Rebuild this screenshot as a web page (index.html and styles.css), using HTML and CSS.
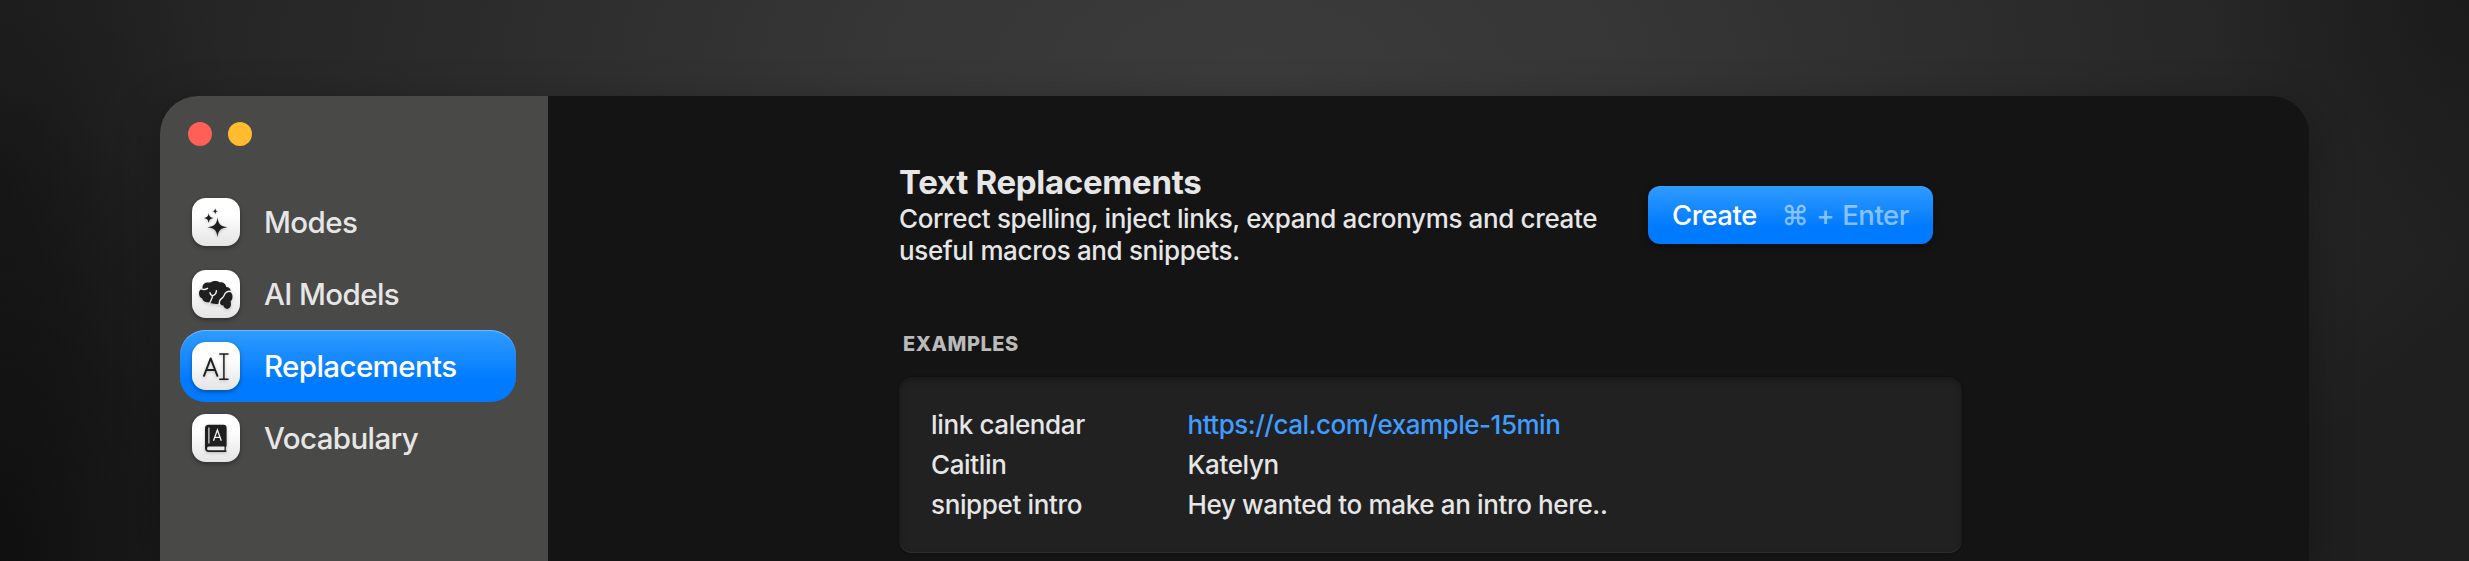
FILE: index.html
```html
<!DOCTYPE html>
<html lang="en">
<head>
<meta charset="utf-8">
<title>Text Replacements</title>
<link rel="stylesheet" href="styles.css">
</head>
<body>
<div class="window">
  <aside class="sidebar">
    <div class="controls"><span class="dot close"></span><span class="dot minimize"></span></div>
    <nav class="nav">
      <a class="item">
        <span class="tile"><svg viewBox="0 0 48 48"><g fill="#1f1f1f"><path d="M25.500 19.200C26.500 26.500 28.200 28.200 35.500 29.200C28.200 30.200 26.500 31.900 25.500 39.200C24.500 31.900 22.800 30.200 15.500 29.200C22.800 28.200 24.500 26.500 25.500 19.200Z"/><path d="M16.700 14.900C17.400 18.500 18 19.200 21.800 20C18 20.800 17.400 21.500 16.700 25.100C16 21.500 15.400 20.800 11.800 20C15.400 19.200 16 18.500 16.700 14.900Z"/><path d="M23.200 10.200C23.600 12.400 24 12.800 26.200 13.200C24 13.600 23.600 14 23.200 16.200C22.800 14 22.400 13.600 20.200 13.200C22.400 12.800 22.800 12.400 23.200 10.200Z"/></g></svg></span>
        <span class="label">Modes</span>
      </a>
      <a class="item">
        <span class="tile"><svg viewBox="0 0 48 48"><path fill="#1f1f1f" d="M10.500 18.500C10 14.500 13 12.300 16.600 12.600C18 12.500 18.500 12.500 19 12.300C21 10.500 25.500 10.500 27.500 12.300C30.500 11.800 34 13.500 34.200 17C37.500 17 39 19.500 38.700 22.200C41.200 24.500 41 29.200 38.500 31.500C39.500 34 39 38 36 38.800C33.500 39.300 31.800 37.500 31.300 35.300C30 35.600 28.800 35 28 33.600C25.500 34.400 22 34 19.500 33.300Q17.500 33.500 16.500 32.200C13.500 32.500 10.800 31.500 10.300 28.500C7 27.500 6 22.500 8 20.300Q9 19 10.500 18.500Z"/><g fill="none" stroke="#f4f4f4" stroke-width="1.400" stroke-linecap="round"><path d="M9.500 18.900Q12.500 20.300 15.500 18.300"/><path d="M17.300 34C18 31.500 20.300 29.500 20.500 25.800Q24.300 24.800 24.400 20.600M20.500 25.800Q18.300 25.200 18 22.800"/><path d="M39.300 21.600C35.500 20.500 32.800 22.800 32 25.600C31.200 28.200 28.800 28.300 27.800 30.500Q27.200 32 27.300 34.500"/></g></svg></span>
        <span class="label">AI Models</span>
      </a>
      <a class="item active">
        <span class="tile"><svg viewBox="0 0 48 48"><g fill="none" stroke="#1f1f1f" stroke-width="1.900" stroke-linecap="round" stroke-linejoin="round"><path d="M12 33.800L18.700 16.400L25.400 33.800M14.200 28H23.200"/><path stroke-width="1.500" d="M27.800 11.900H36M27.800 37.300H36M31.900 11.900V37.300"/></g></svg></span>
        <span class="label">Replacements</span>
      </a>
      <a class="item">
        <span class="tile"><svg viewBox="0 0 48 48"><path fill="#1f1f1f" d="M16.500 10.800H31.500Q34.600 10.800 34.600 13.800V31.500Q34.600 32.500 33.800 33V36.300H34.300V37.900H17Q13 37.900 13 34V14.300Q13 10.800 16.500 10.800Z"/><path fill="#e9e9e9" d="M17 32.500H32.500V36.300H17Q15 36.200 15 34.400Q15 32.600 17 32.500Z"/><path d="M16.900 13.500V29.500" stroke="#f2f2f2" stroke-width="1.100"/><path d="M21.500 26.800L25.400 16L29.300 26.800M22.800 23.300H28" fill="none" stroke="#f2f2f2" stroke-width="1.300"/></svg></span>
        <span class="label">Vocabulary</span>
      </a>
    </nav>
  </aside>
  <main class="main">
    <header class="header">
      <div class="intro">
        <h1 class="title">Text Replacements</h1>
        <p class="desc">Correct spelling, inject links, expand acronyms and create<br>useful macros and snippets.</p>
      </div>
      <button class="create"><span class="create-label">Create</span><span class="keys"><span>⌘</span><span>+</span><span>Enter</span></span></button>
    </header>
    <h2 class="section">EXAMPLES</h2>
    <section class="card">
      <span>link calendar</span><a class="url">https://cal.com/example-15min</a>
      <span>Caitlin</span><span>Katelyn</span>
      <span>snippet intro</span><span>Hey wanted to make an intro here..</span>
    </section>
  </main>
</div>
</body>
</html>
```
FILE: styles.css
```css
* { box-sizing: border-box; }
html { height: 561px; overflow: hidden; }
body {
  margin: 0;
  width: 2469px;
  height: 561px;
  overflow: hidden;
  padding: 96px 160px 0;
  font-family: Inter, "Liberation Sans", sans-serif;
  color: #e6e6e6;
  background:
    radial-gradient(240px 480px at 0 100%, rgba(8,8,8,.7), transparent),
    radial-gradient(240px 340px at 0 180px, rgba(18,18,18,.55), transparent),
    radial-gradient(260px 260px at 2469px 0, rgba(20,20,20,.5), transparent),
    radial-gradient(1350px 620px at 1250px 60px, #3b3b3b 0%, #363636 28%, #2a2a2a 62%, #1f1f1f 100%);
}
.window {
  display: flex;
  width: 2149px;
  height: 465px;
  border-radius: 38px 38px 0 0;
  overflow: hidden;
  background: #141414;
  box-shadow: 0 10px 45px rgba(0,0,0,.28);
}
.sidebar {
  width: 388px;
  padding: 26px 32px 0 20px;
  background: #494947;
}
.controls { display: flex; gap: 16px; padding-left: 8px; }
.dot { width: 24px; height: 24px; border-radius: 50%; }
.close { background: #ff5f57; }
.minimize { background: #febc2e; }
.nav { margin-top: 39.500px; }
.item {
  display: flex;
  align-items: center;
  gap: 24px;
  height: 72px;
  padding-left: 12px;
  border-radius: 25px;
  font-size: 29.500px;
  font-weight: 450;
  letter-spacing: -.6px;
}
.active {
  color: #fff;
  background: linear-gradient(#309cff, #007aff 70%);
  box-shadow: inset 0 1px 0 rgba(255,255,255,.3);
}
.tile {
  width: 48px;
  height: 48px;
  border-radius: 14px;
  background: linear-gradient(#fff 35%, #e4e4e4);
  box-shadow: 0 2px 4px rgba(0,0,0,.35);
}
.tile svg { display: block; width: 48px; height: 48px; filter: drop-shadow(0 1.500px 1.500px rgba(0,0,0,.22)); }
.label { line-height: 36px; white-space: nowrap; }
.main { flex: 1; padding: 66px 347px 0 351px; }
.header { display: flex; }
.intro { width: 749px; }
.title { margin: 0; font-size: 33px; line-height: 40px; font-weight: 650; letter-spacing: -.3px; }
.desc { margin: 1px 0 0; font-size: 26px; line-height: 32px; font-weight: 450; letter-spacing: -.36px; white-space: nowrap; }
.create {
  display: flex;
  align-items: center;
  width: 285px;
  height: 58px;
  margin-top: 24px;
  padding: 0 24px;
  border: 0;
  border-radius: 12px;
  background: linear-gradient(#309cff, #007aff 70%);
  box-shadow: 0 2px 8px rgba(0,0,0,.5);
  font: 500 27.500px/36px Inter, sans-serif;
  letter-spacing: -.45px;
  color: #fff;
}
.create-label { width: 111px; text-align: left; }
.keys { display: flex; gap: 8px; font-weight: 450; color: rgba(255,255,255,.5); }
.section { margin: 65px 0 0 4px; font-size: 20px; line-height: 24px; font-weight: 800; letter-spacing: .55px; color: #bababa; }
.card {
  display: grid;
  grid-template-columns: 256.500px 1fr;
  width: 1063px;
  height: 176px;
  margin-top: 21px;
  padding: 28px 32px;
  grid-auto-rows: 40px;
  border-radius: 13px;
  background: #212121;
  box-shadow: inset 0 3px 6px rgba(0,0,0,.3), inset 0 -1px 0 #303030, 0 0 2px #0c0c0c;
  font-size: 26px;
  font-weight: 450;
  letter-spacing: -.36px;
  line-height: 40px;
  white-space: nowrap;
}
.url { color: #409cff; letter-spacing: -.48px; }
```
